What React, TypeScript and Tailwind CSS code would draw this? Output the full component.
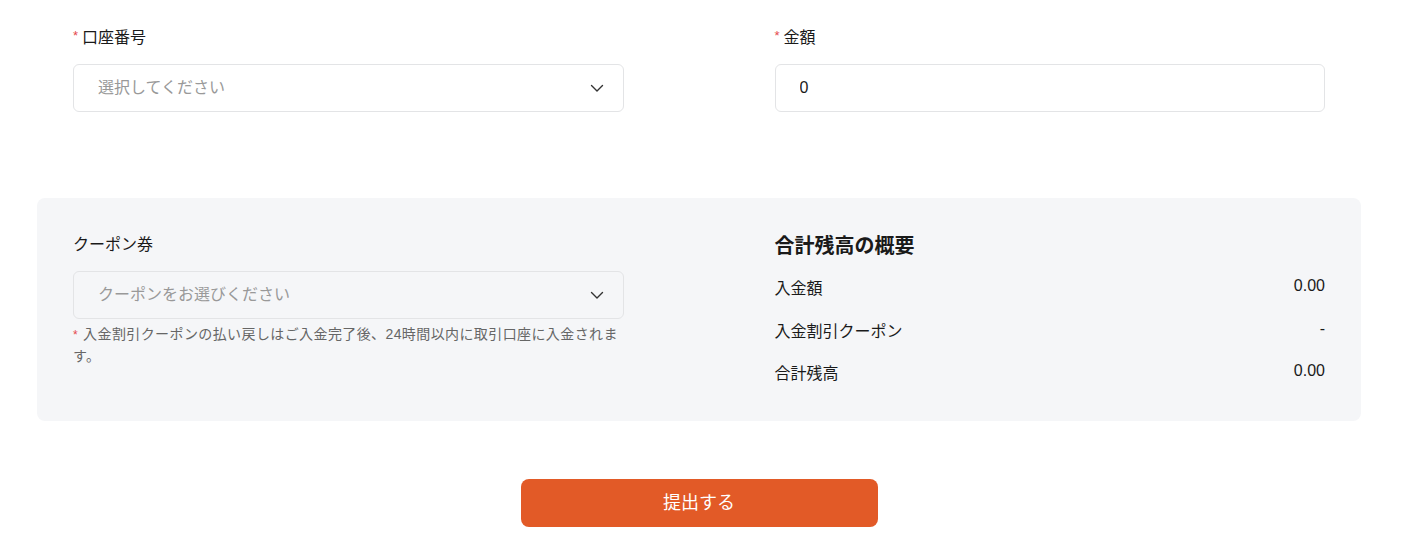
import { useState } from "react";

const jp = "font-['Liberation_Sans','Noto_Sans_CJK_JP',sans-serif]";

function Chevron() {
  return (
    <svg width="16" height="16" viewBox="0 0 16 16" fill="none" className="text-[#333]">
      <path d="M2.5 5.5L8 11L13.5 5.5" stroke="currentColor" strokeWidth="1.4" strokeLinecap="round" strokeLinejoin="round" />
    </svg>
  );
}

function Label({ text, required }: { text: string; required?: boolean }) {
  return (
    <div className="flex items-center h-6 text-[16px] text-[#1a1a1a]">
      {required && <span className="text-[#e5484d] text-[13px] mr-1 -mt-1">*</span>}
      <span>{text}</span>
    </div>
  );
}

function SelectBox({ placeholder }: { placeholder: string }) {
  return (
    <button
      type="button"
      className="w-full h-12 flex items-center justify-between pl-6 pr-[18px] border border-[#e3e4e6] rounded-md text-[16px] text-[#999]"
    >
      <span>{placeholder}</span>
      <Chevron />
    </button>
  );
}

export default function App() {
  const [amount, setAmount] = useState("0");

  const rows = [
    { label: "入金額", value: "0.00" },
    { label: "入金割引クーポン", value: "-" },
    { label: "合計残高", value: "0.00" },
  ];

  return (
    <div className={`bg-white min-h-screen ${jp}`}>
      <div className="w-[1324px] ml-[37px]">
        {/* account + amount */}
        <div className="grid grid-cols-2 gap-x-[151px] px-9 pt-[26px]">
          <div>
            <Label text="口座番号" required />
            <div className="mt-[14px]">
              <SelectBox placeholder="選択してください" />
            </div>
          </div>
          <div>
            <Label text="金額" required />
            <input
              value={amount}
              onChange={(e) => setAmount(e.target.value)}
              className="mt-[14px] w-full h-12 pl-6 border border-[#e3e4e6] rounded-md text-[16px] text-[#1a1a1a] outline-none"
            />
          </div>
        </div>

        {/* coupon + summary */}
        <div className="mt-[86px] bg-[#f5f6f8] rounded-lg grid grid-cols-2 gap-x-[151px] px-9 pt-[34px] pb-[35px]">
          <div className="pt-px">
            <Label text="クーポン券" />
            <div className="mt-[14px]">
              <SelectBox placeholder="クーポンをお選びください" />
            </div>
            <p className="mt-[5px] text-[14px] leading-[21px] tracking-[0.4px] text-[#666] before:content-['*'] before:text-[#e5484d] before:text-[12px] before:mr-[5px]">
              入金割引クーポンの払い戻しはご入金完了後、24時間以内に取引口座に入金されます。
            </p>
          </div>
          <div>
            <h3 className="text-[20px] leading-7 font-bold text-[#1a1a1a]">合計残高の概要</h3>
            <div className="mt-[17px] flex flex-col gap-[18.5px]">
              {rows.map((r) => (
                <div key={r.label} className="flex items-start justify-between h-6 text-[16px] text-[#1a1a1a]">
                  <span className="leading-6">{r.label}</span>
                  <span className="leading-[18px]">{r.value}</span>
                </div>
              ))}
            </div>
          </div>
        </div>

        <div className="flex justify-center mt-[58px]">
          <button className="w-[357px] h-12 rounded-lg bg-[#e25a27] text-white text-[18px]">
            提出する
          </button>
        </div>
      </div>
    </div>
  );
}
